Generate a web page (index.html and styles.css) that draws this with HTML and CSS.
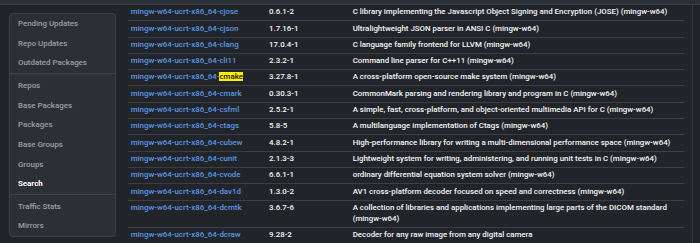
FILE: index.html
```html
<!DOCTYPE html>
<html lang="en">
<head>
    <meta charset="UTF-8">
    <meta name="viewport" content="width=device-width, initial-scale=1.0">
    <title>Search - MSYS2 Packages</title>
    <link rel="stylesheet" href="styles.css">
</head>
<body>
    <header class="topbar"></header>

    <div class="layout">
        <aside class="side">
            <nav class="side-panel">
                <div class="side-group">
                    <a href="#" class="side-link">Pending Updates</a>
                    <a href="#" class="side-link">Repo Updates</a>
                    <a href="#" class="side-link">Outdated Packages</a>
                </div>
                <div class="side-group">
                    <a href="#" class="side-link">Repos</a>
                    <a href="#" class="side-link">Base Packages</a>
                    <a href="#" class="side-link">Packages</a>
                    <a href="#" class="side-link">Base Groups</a>
                    <a href="#" class="side-link">Groups</a>
                    <a href="#" class="side-link active">Search</a>
                </div>
                <div class="side-group">
                    <a href="#" class="side-link">Traffic Stats</a>
                    <a href="#" class="side-link">Mirrors</a>
                </div>
            </nav>
        </aside>

        <main class="content">
            <table class="pkg-table">
                <colgroup>
                    <col class="col-name">
                    <col class="col-version">
                    <col>
                </colgroup>
                <tbody>
                    <tr><td><a href="#">mingw-w64-ucrt-x86_64-cjose</a></td><td>0.6.1-2</td><td>C library implementing the Javascript Object Signing and Encryption (JOSE) (mingw-w64)</td></tr>
                    <tr><td><a href="#">mingw-w64-ucrt-x86_64-cjson</a></td><td>1.7.16-1</td><td>Ultralightweight JSON parser in ANSI C (mingw-w64)</td></tr>
                    <tr><td><a href="#">mingw-w64-ucrt-x86_64-clang</a></td><td>17.0.4-1</td><td>C language family frontend for LLVM (mingw-w64)</td></tr>
                    <tr><td><a href="#">mingw-w64-ucrt-x86_64-cli11</a></td><td>2.3.2-1</td><td>Command line parser for C++11 (mingw-w64)</td></tr>
                    <tr><td><a href="#">mingw-w64-ucrt-x86_64-<mark>cmake</mark></a></td><td>3.27.8-1</td><td>A cross-platform open-source make system (mingw-w64)</td></tr>
                    <tr><td><a href="#">mingw-w64-ucrt-x86_64-cmark</a></td><td>0.30.3-1</td><td>CommonMark parsing and rendering library and program in C (mingw-w64)</td></tr>
                    <tr><td><a href="#">mingw-w64-ucrt-x86_64-csfml</a></td><td>2.5.2-1</td><td>A simple, fast, cross-platform, and object-oriented multimedia API for C (mingw-w64)</td></tr>
                    <tr><td><a href="#">mingw-w64-ucrt-x86_64-ctags</a></td><td>5.8-5</td><td>A multilanguage implementation of Ctags (mingw-w64)</td></tr>
                    <tr><td><a href="#">mingw-w64-ucrt-x86_64-cubew</a></td><td>4.8.2-1</td><td>High-performance library for writing a multi-dimensional performance space (mingw-w64)</td></tr>
                    <tr><td><a href="#">mingw-w64-ucrt-x86_64-cunit</a></td><td>2.1.3-3</td><td>Lightweight system for writing, administering, and running unit tests in C (mingw-w64)</td></tr>
                    <tr><td><a href="#">mingw-w64-ucrt-x86_64-cvode</a></td><td>6.6.1-1</td><td>ordinary differential equation system solver (mingw-w64)</td></tr>
                    <tr><td><a href="#">mingw-w64-ucrt-x86_64-dav1d</a></td><td>1.3.0-2</td><td>AV1 cross-platform decoder focused on speed and correctness (mingw-w64)</td></tr>
                    <tr><td><a href="#">mingw-w64-ucrt-x86_64-dcmtk</a></td><td>3.6.7-6</td><td>A collection of libraries and applications implementing large parts of the DICOM standard (mingw-w64)</td></tr>
                    <tr><td><a href="#">mingw-w64-ucrt-x86_64-dcraw</a></td><td>9.28-2</td><td>Decoder for any raw image from any digital camera</td></tr>
                </tbody>
            </table>
        </main>
    </div>
</body>
</html>
```

FILE: styles.css
```css
* {
    margin: 0;
    padding: 0;
    box-sizing: border-box;
}

body {
    background-color: #212529;
    color: #dee2e6;
    font-family: Roboto, "Liberation Sans", sans-serif;
    overflow: hidden;
}

a {
    text-decoration: none;
}

.topbar {
    height: 5px;
    background-color: #2b3035;
    border-bottom: 1px solid #3a3f45;
}

.layout {
    display: flex;
    align-items: flex-start;
}

/* menu de la gauche */
.side {
    width: 120px;
    flex-shrink: 0;
    padding: 8px 4px 0 9px;
}

.side-panel {
    background-color: #2b3035;
    border: 1px solid #3b4046;
    border-radius: 4px;
}

.side-group + .side-group {
    border-top: 1px solid #3b4046;
    padding-top: 1.8px;
}

.side-link {
    display: block;
    height: 19.7px;
    line-height: 20.5px;
    padding-left: 8px;
    font-size: 7.9px;
    font-weight: 500;
    color: #9a9fa4;
    white-space: nowrap;
}

.side-link.active {
    color: #ffffff;
    font-weight: bold;
}

/* tableau des paquets */
.content {
    width: 573px;
    padding: 0 8px;
    border-right: 1px solid #373b3e;
    min-height: 240px;
}

.pkg-table {
    width: 100%;
    border-collapse: collapse;
    table-layout: fixed;
    font-size: 7.9px;
    font-weight: 500;
}

.col-name {
    width: 138.3px;
}

.col-version {
    width: 83.7px;
}

.pkg-table td {
    padding: 2.3px 2.7px;
    line-height: 10.7px;
    border-bottom: 1px solid #3a3f45;
    vertical-align: top;
    color: #f4f5f6;
    white-space: nowrap;
}

.pkg-table td:last-child {
    white-space: normal;
    padding-right: 0;
}

.pkg-table a {
    color: #5b95e3;
}

mark {
    background-color: #fff200;
    color: #111;
}
```
